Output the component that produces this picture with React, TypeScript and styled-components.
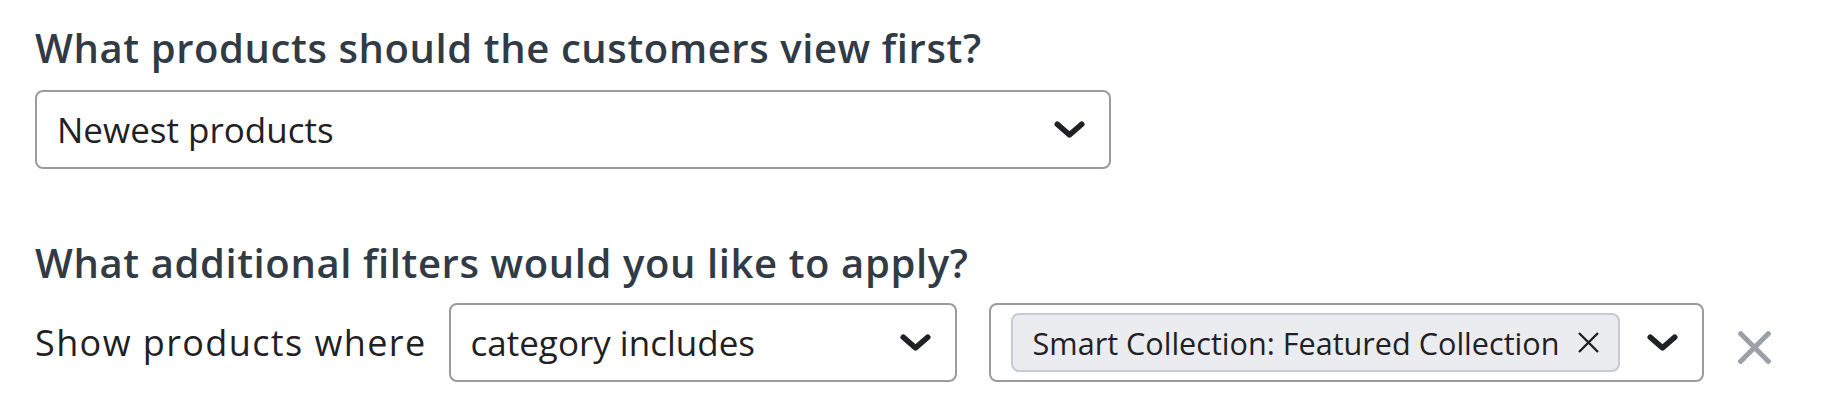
import * as React from "react";
import styled, { createGlobalStyle } from "styled-components";

const GlobalStyle = createGlobalStyle`
  html, body {
    margin: 0;
    padding: 0;
    background: #fff;
  }
  body {
    font-family: "Open Sans", "Liberation Sans", sans-serif;
    color: #1f2124;
  }
`;

const Page = styled.div`
  padding: 24px 0 0 35px;
`;

const Section = styled.section<{ $spaced?: boolean }>`
  margin-top: ${p => (p.$spaced ? "70px" : "0")};
`;

const Heading = styled.h2<{ $gap: number }>`
  margin: 0 0 ${p => p.$gap}px;
  font-size: 40px;
  line-height: 48px;
  font-weight: 600;
  letter-spacing: 0.6px;
  color: #313b46;
`;

const Select = styled.div<{ $width: number; $offset?: number }>`
  box-sizing: border-box;
  width: ${p => p.$width}px;
  height: 79px;
  margin-left: ${p => p.$offset ?? 0}px;
  border: 2px solid #9b9b9b;
  border-radius: 8px;
  background: #fff;
  display: flex;
  align-items: center;
  padding: 0 24px 0 20px;
`;

const Value = styled.div`
  flex: 1;
  font-size: 35px;
  line-height: 40px;
  color: #1f2124;
  white-space: nowrap;
`;

const Row = styled.div`
  display: flex;
  align-items: center;
`;

const Label = styled.span`
  font-size: 36px;
  line-height: 40px;
  letter-spacing: 1.4px;
  color: #1f2124;
  margin-right: 22px;
  white-space: nowrap;
`;

const Tags = styled.div`
  flex: 1;
  display: flex;
  align-items: center;
`;

const Tag = styled.div`
  box-sizing: border-box;
  height: 59px;
  display: flex;
  align-items: center;
  gap: 19px;
  padding: 0 19px 0 20px;
  background: #ebecef;
  border: 2px solid #c6cad1;
  border-radius: 8px;
  font-size: 30.6px;
  color: #1f2124;
  white-space: nowrap;
`;

const IconButton = styled.button`
  border: 0;
  background: none;
  padding: 0;
  display: flex;
  cursor: pointer;
`;

const RemoveButton = styled(IconButton)`
  margin-left: 34px;
  margin-top: 10px;
`;

const Chevron = () => (
  <svg width="31" height="17" viewBox="0 0 31 17" fill="none">
    <polyline
      points="3.2,3.2 15.5,13.8 27.8,3.2"
      stroke="#1f2124"
      strokeWidth="5.5"
      strokeLinecap="round"
      strokeLinejoin="round"
    />
  </svg>
);

const Cross = ({ size, stroke, color }: { size: number; stroke: number; color: string }) => (
  <svg width={size} height={size} viewBox={`0 0 ${size} ${size}`} fill="none">
    <path
      d={`M1 1L${size - 1} ${size - 1}M${size - 1} 1L1 ${size - 1}`}
      stroke={color}
      strokeWidth={stroke}
    />
  </svg>
);

const App = () => (
  <Page>
    <GlobalStyle />
    <Section>
      <Heading $gap={18}>What products should the customers view first?</Heading>
      <Select $width={1076}>
        <Value>Newest products</Value>
        <Chevron />
      </Select>
    </Section>
    <Section $spaced>
      <Heading $gap={16}>What additional filters would you like to apply?</Heading>
      <Row>
        <Label>Show products where</Label>
        <Select $width={508}>
          <Value>category includes</Value>
          <Chevron />
        </Select>
        <Select $width={715} $offset={32}>
          <Tags>
            <Tag>
              Smart Collection: Featured Collection
              <IconButton aria-label="Remove">
                <Cross size={21} stroke={2.4} color="#1f2124" />
              </IconButton>
            </Tag>
          </Tags>
          <Chevron />
        </Select>
        <RemoveButton aria-label="Remove filter">
          <Cross size={33} stroke={5} color="#9aa0a6" />
        </RemoveButton>
      </Row>
    </Section>
  </Page>
);

export default App;
